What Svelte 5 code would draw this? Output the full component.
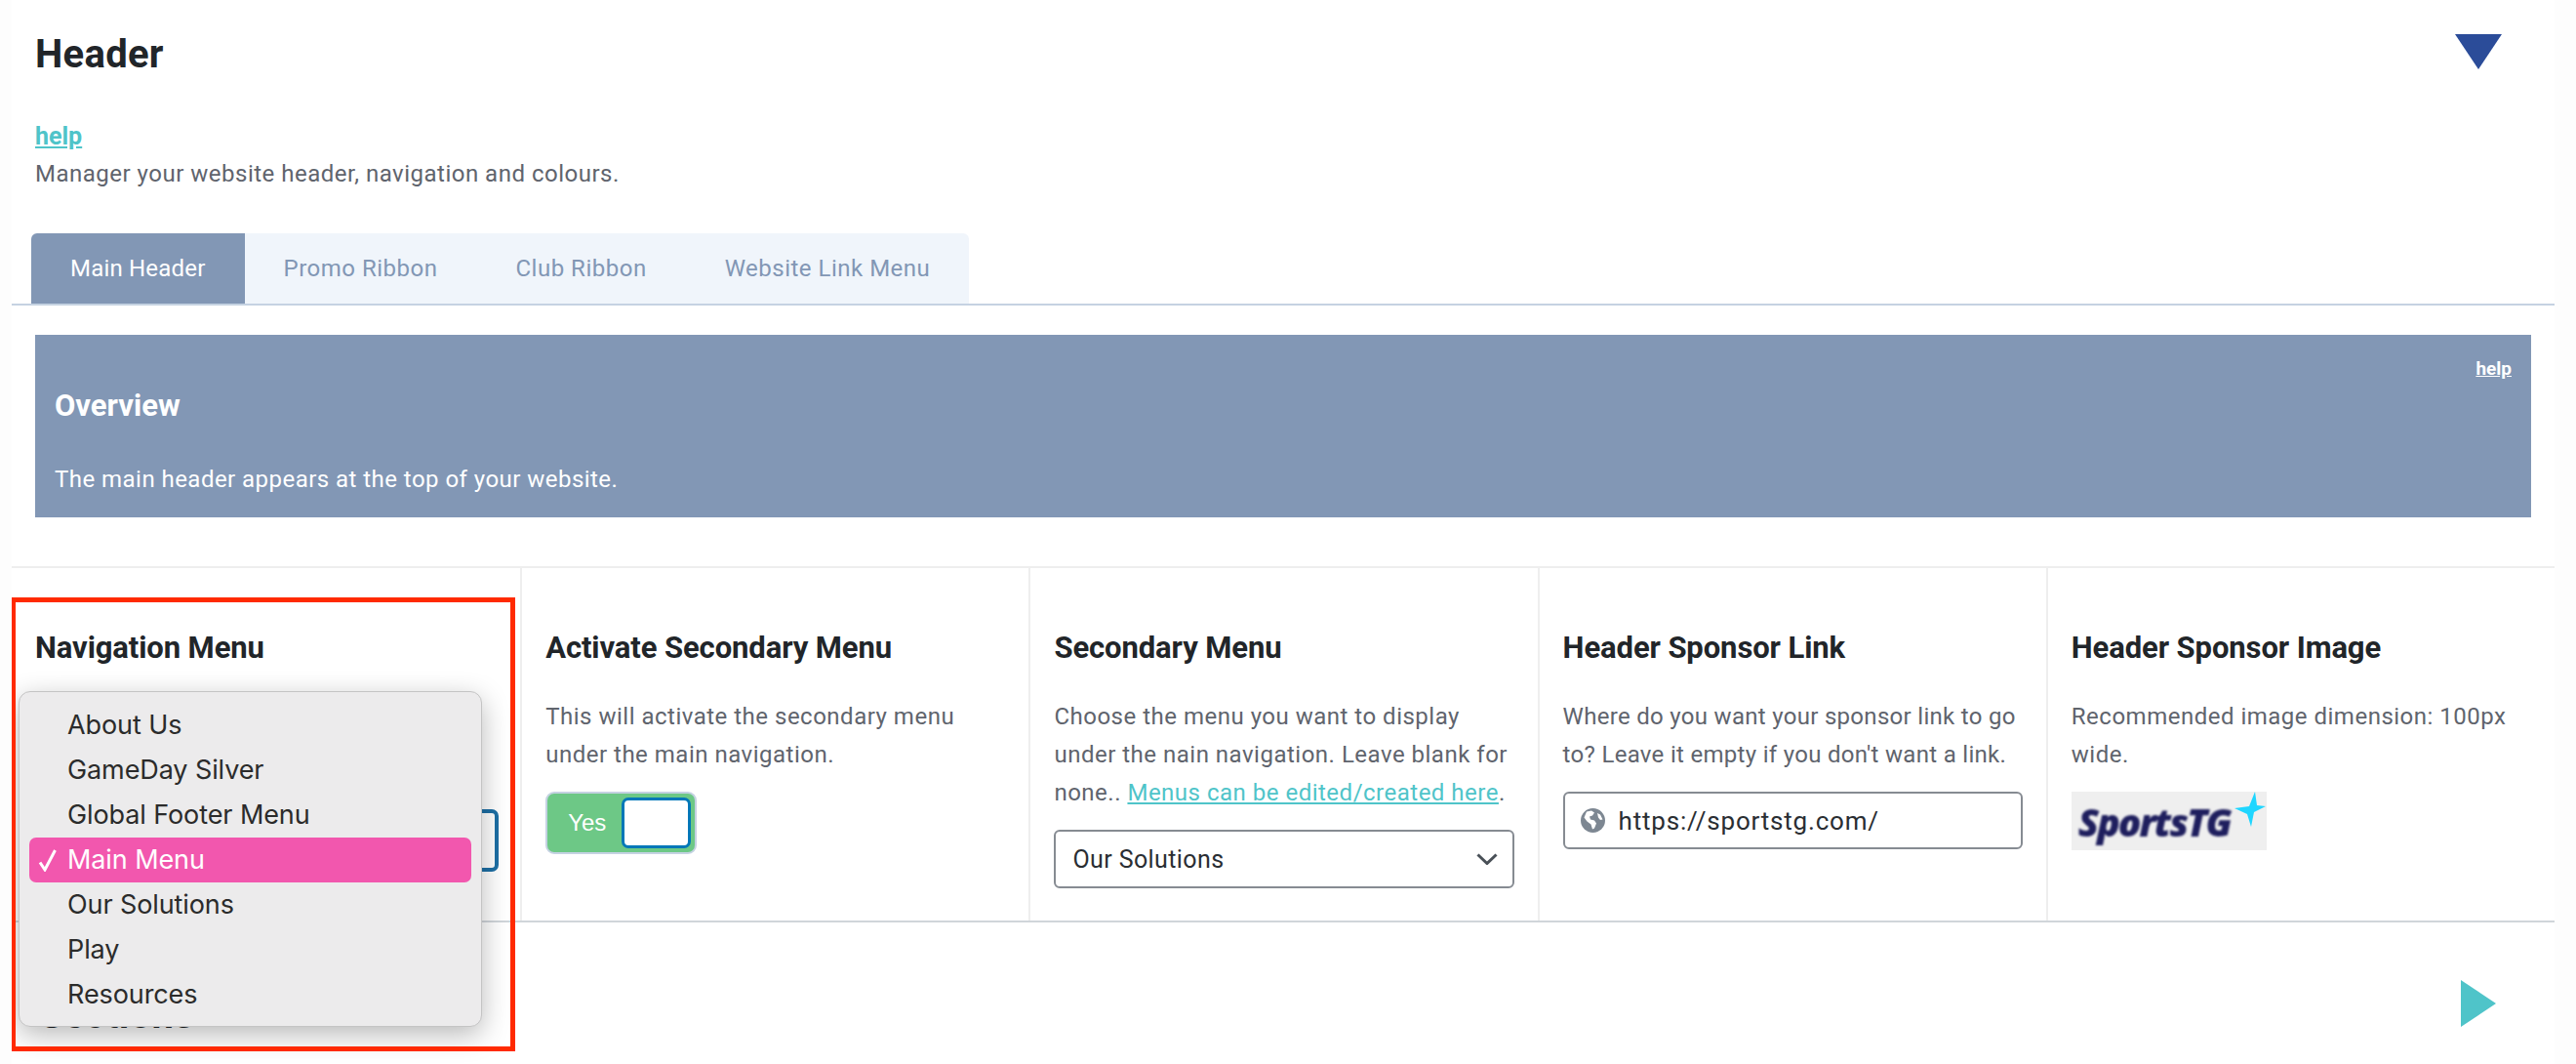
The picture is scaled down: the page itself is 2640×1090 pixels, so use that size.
<script>
  const tabs = ["Main Header", "Promo Ribbon", "Club Ribbon", "Website Link Menu"];
  const menus = ["About Us", "GameDay Silver", "Global Footer Menu", "Main Menu", "Our Solutions", "Play", "Resources"];
  const selected = "Main Menu";
</script>

<div class="page">
  <header class="head">
    <h1>Header</h1>
    <svg class="tri-down" width="48" height="36" viewBox="0 0 48 36"><polygon points="0,0 48,0 24,36" /></svg>
    <a class="help" href="#help">help</a>
    <p class="lead">Manager your website header, navigation and colours.</p>
  </header>

  <nav class="tabs">
    <div class="tab-group">
      {#each tabs as tab, i}
        <div class="tab" class:active={i === 0}>{tab}</div>
      {/each}
    </div>
  </nav>

  <section class="overview">
    <a class="overview-help" href="#help">help</a>
    <h2>Overview</h2>
    <p>The main header appears at the top of your website.</p>
  </section>

  <div class="cols">
    <div class="col">
      <h3>Navigation Menu</h3>
      <div class="nav-select"></div>
    </div>
    <div class="col">
      <h3>Activate Secondary Menu</h3>
      <p>This will activate the secondary menu<br />under the main navigation.</p>
      <div class="toggle">
        <span>Yes</span>
        <div class="knob"></div>
      </div>
    </div>
    <div class="col">
      <h3>Secondary Menu</h3>
      <p>Choose the menu you want to display<br />under the nain navigation. Leave blank for<br />none.. <a href="#menus">Menus can be edited/created here</a>.</p>
      <div class="select">
        <span>Our Solutions</span>
        <svg width="22" height="12" viewBox="0 0 22 12"><path d="M1.5 1.5 11 10.5l9.5-9" /></svg>
      </div>
    </div>
    <div class="col">
      <h3>Header Sponsor Link</h3>
      <p class="tight">Where do you want your sponsor link to go<br />to? Leave it empty if you don't want a link.</p>
      <div class="url">
        <svg width="25" height="25" viewBox="0 0 25 25">
          <circle cx="12.5" cy="12.5" r="12.5" fill="#7d8792" />
          <path d="M6 3.5 11 2.5l3 2-2 3-3 1 1 3 4 1 2 3-2 5-2 1-1.500-5-4-3-3-4zM17 5l3 1.500 2.500 5-2.500 .5-2-2.500z" fill="#fff" />
        </svg>
        <span>https://sportstg.com/</span>
      </div>
    </div>
    <div class="col">
      <h3>Header Sponsor Image</h3>
      <p>Recommended image dimension: 100px<br />wide.</p>
      <div class="logo">
        <span>SportsTG</span>
        <svg width="32" height="36" viewBox="0 0 32 36"><path d="M21 0 23 14 32 15 20 21 17 36 13 23 0 17 15 15z" fill="#1fd6ff" /></svg>
      </div>
    </div>
  </div>

  <section class="sections">
    <h1>Sections</h1>
    <svg class="tri-right" width="36" height="48" viewBox="0 0 36 48"><polygon points="0,0 36,24 0,48" /></svg>
  </section>

  <div class="menu">
    {#each menus as m}
      <div class="menu-row" class:picked={m === selected}>
        {#if m === selected}
          <svg class="check" width="20" height="24" viewBox="0 0 20 24"><path d="M2 14.500 7 22 17.500 2" /></svg>
        {/if}
        {m}
      </div>
    {/each}
  </div>
  <div class="redbox"></div>
</div>

<style>
  :global(body) {
    margin: 0;
    background: #fdfdfd;
  }
  .page {
    position: relative;
    width: 2606px;
    height: 1090px;
    margin-left: 12px;
    background: #fff;
    overflow: hidden;
    font-family: Roboto, "Liberation Sans", sans-serif;
    font-size: 24px;
    color: #60646d;
  }
  .head {
    position: relative;
    padding: 34px 24px 0;
  }
  h1 {
    margin: 0;
    font-size: 40px;
    line-height: 44px;
    font-weight: 700;
    color: #212529;
    letter-spacing: 0.3px;
  }
  .tri-down {
    position: absolute;
    left: 2504px;
    top: 35px;
    fill: #2b4c99;
  }
  .help {
    display: block;
    width: max-content;
    margin-top: 43px;
    font-size: 25px;
    line-height: 38px;
    font-weight: 700;
    color: #4fc4c9;
  }
  .lead {
    margin: 0;
    line-height: 38px;
    letter-spacing: 0.5px;
  }
  .tabs {
    margin-top: 42px;
    padding-left: 20px;
    border-bottom: 2px solid #c5d2e2;
  }
  .tab-group {
    display: flex;
    width: max-content;
    background: #f0f5fb;
    border-radius: 6px 6px 0 0;
    overflow: hidden;
  }
  .tab {
    height: 72px;
    padding: 0 40px;
    line-height: 72px;
    letter-spacing: 0.5px;
    color: #8297b5;
  }
  .tab.active {
    background: #8297b5;
    color: #fff;
    letter-spacing: 0.2px;
    padding-right: 40px;
  }
  .overview {
    position: relative;
    height: 187px;
    box-sizing: border-box;
    margin: 30px 24px 0;
    padding: 53px 20px 0;
    background: #8297b5;
    color: #fff;
  }
  .overview h2 {
    margin: 0;
    font-size: 31px;
    line-height: 40px;
    font-weight: 700;
  }
  .overview p {
    margin: 35px 0 0;
    line-height: 40px;
    letter-spacing: 0.46px;
  }
  .overview-help {
    position: absolute;
    right: 20px;
    top: 24px;
    font-size: 19px;
    line-height: 22px;
    font-weight: 700;
    color: #fff;
  }
  .cols {
    display: flex;
    height: 365px;
    box-sizing: border-box;
    margin-top: 50px;
    border-top: 2px solid #eeeeee;
    border-bottom: 2px solid #d0d5da;
  }
  .col {
    width: 522px;
    box-sizing: border-box;
    padding: 62px 24px 0 24px;
    border-left: 2px solid #eeeeee;
  }
  .col:first-child {
    border-left: 0;
  }
  h3 {
    margin: 0;
    font-size: 31px;
    line-height: 40px;
    font-weight: 700;
    color: #212529;
    letter-spacing: -0.1px;
  }
  .col p {
    margin: 31px 0 0;
    line-height: 39px;
    letter-spacing: 0.5px;
    white-space: nowrap;
  }
  .col p.tight {
    letter-spacing: 0.3px;
  }
  .col p a {
    color: #4fc4c9;
  }
  .nav-select {
    height: 64px;
    box-sizing: border-box;
    margin-top: 145px;
    margin-right: -2px;
    border: 4px solid #1d6fa5;
    border-radius: 7px;
  }
  .toggle {
    display: flex;
    align-items: center;
    justify-content: space-between;
    width: 155px;
    height: 64px;
    box-sizing: border-box;
    margin-top: 18px;
    padding-left: 21px;
    padding-right: 4px;
    background: #6dc886;
    border: 2px solid #c5d2e2;
    border-radius: 9px;
    font-family: "Liberation Sans", sans-serif;
    font-size: 24px;
    color: #fff;
  }
  .knob {
    width: 71px;
    height: 52px;
    box-sizing: border-box;
    background: #fff;
    border: 3px solid #0077b8;
    border-radius: 7px;
  }
  .select {
    display: flex;
    align-items: center;
    justify-content: space-between;
    height: 60px;
    box-sizing: border-box;
    margin-top: 18px;
    padding: 0 15px 0 17px;
    border: 2px solid #868b92;
    border-radius: 6px;
    font-size: 25px;
    letter-spacing: 0.4px;
    color: #2a2e33;
  }
  .select svg {
    fill: none;
    stroke: #495057;
    stroke-width: 3;
  }
  .url {
    display: flex;
    align-items: center;
    gap: 14px;
    height: 59px;
    box-sizing: border-box;
    margin-top: 18px;
    padding-left: 16px;
    border: 2px solid #868b92;
    border-radius: 6px;
    font-size: 26px;
    color: #2a2e33;
    letter-spacing: 0.8px;
  }
  .logo {
    display: flex;
    position: relative;
    width: 200px;
    height: 60px;
    margin-top: 18px;
    background: #efefef;
    overflow: hidden;
  }
  .logo span {
    margin: 9px 0 0 7px;
    font-size: 39px;
    line-height: 44px;
    font-family: "Open Sans", sans-serif;
    font-weight: 800;
    font-style: italic;
    letter-spacing: -2px;
    color: #1f1f5e;
    filter: blur(0.8px);
  }
  .logo svg {
    position: absolute;
    right: 1px;
    top: 0;
    filter: blur(0.4px);
  }
  .sections {
    position: relative;
    padding: 73px 28px 0;
  }
  .tri-right {
    position: absolute;
    left: 2510px;
    top: 59px;
    fill: #4fc4c9;
  }
  .menu {
    position: absolute;
    left: 7px;
    top: 708px;
    width: 475px;
    height: 344px;
    box-sizing: border-box;
    padding: 11px 10px 0;
    background: #ecebec;
    border: 1px solid #c4c4c4;
    border-radius: 12px;
    box-shadow: 0 8px 28px rgba(0, 0, 0, 0.28);
    font-family: Inter, "Liberation Sans", sans-serif;
    font-size: 27px;
    letter-spacing: -0.1px;
    color: #2b2b2b;
  }
  .menu-row {
    position: relative;
    height: 46px;
    padding-left: 39px;
    line-height: 46px;
    border-radius: 7px;
  }
  .menu-row.picked {
    background: #f257ae;
    color: #fff;
  }
  .check {
    position: absolute;
    left: 9px;
    top: 11px;
    fill: none;
    stroke: #fff;
    stroke-width: 3;
  }
  .redbox {
    position: absolute;
    left: -1px;
    top: 612px;
    width: 517px;
    height: 465px;
    box-sizing: border-box;
    border: 5px solid #ff2a00;
  }
</style>
